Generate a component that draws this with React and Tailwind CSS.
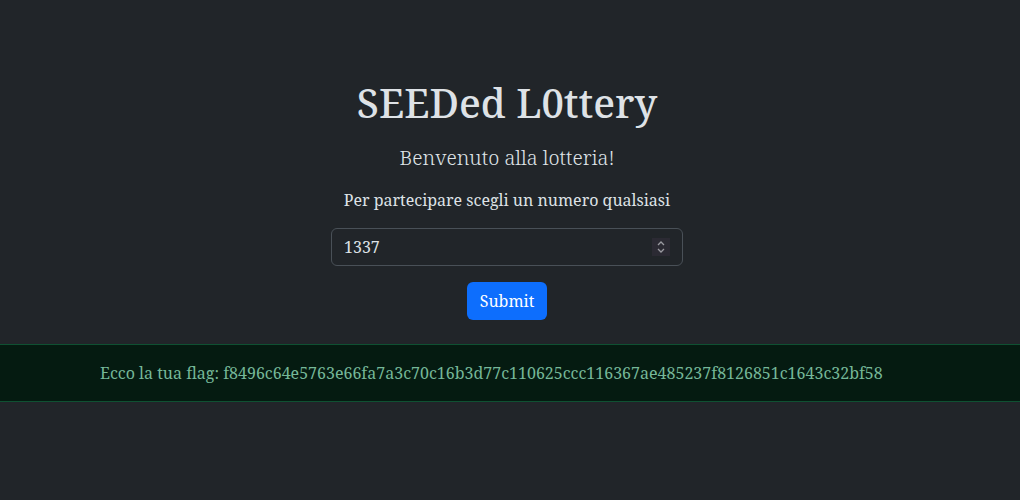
import React, { useState } from "react";

const App = () => {
  const [num, setNum] = useState("1337");
  const flag =
    "f8496c64e5763e66fa7a3c70c16b3d77c110625ccc116367ae485237f8126851c1643c32bf58";

  return (
    <main className="min-h-[500px] bg-[#212529] text-[#dee2e6] font-['Noto_Serif',serif] pt-[79px]">
      <section className="flex flex-col items-center pr-[6px]">
        <h1 className="text-[40px] font-medium leading-[48px] mb-[16px]">SEEDed L0ttery</h1>
        <p className="text-[20px] font-light leading-[30px] mb-[15px]">
          Benvenuto alla lotteria!
        </p>
        <form className="flex flex-col items-center" onSubmit={(e) => e.preventDefault()}>
          <label className="text-[16px] leading-[24px] mb-[16px]">
            Per partecipare scegli un numero qualsiasi
          </label>
          <div className="w-[352px] h-[38px] border border-[#495057] rounded-[6px] flex items-center pl-[12px] pr-[12px] mb-[16px]">
            <input
              type="text"
              value={num}
              onChange={(e) => setNum(e.target.value)}
              className="flex-1 min-w-0 bg-transparent outline-none text-[16px] text-[#dee2e6] font-['Noto_Serif',serif]"
            />
            <span className="w-[18px] h-[18px] bg-[#2b2a33] flex items-center justify-center">
              <svg width="10" height="14" viewBox="0 0 10 14" fill="none" stroke="#9a9aa0" strokeWidth="1.3">
                <path d="M2 5 L5 2 L8 5" />
                <path d="M2 9 L5 12 L8 9" />
              </svg>
            </span>
          </div>
          <button
            type="submit"
            className="w-[80px] h-[38px] bg-[#0d6efd] rounded-[6px] text-white text-[16px] font-['Noto_Serif',serif]"
          >
            Submit
          </button>
        </form>
      </section>
      <div className="mt-[24px] h-[58px] bg-[#051b11] border-y border-[#0f5132] text-[#75b798] text-[16px] flex items-center pl-[100px]">
        Ecco la tua flag: {flag}
      </div>
    </main>
  );
};

export default App;
